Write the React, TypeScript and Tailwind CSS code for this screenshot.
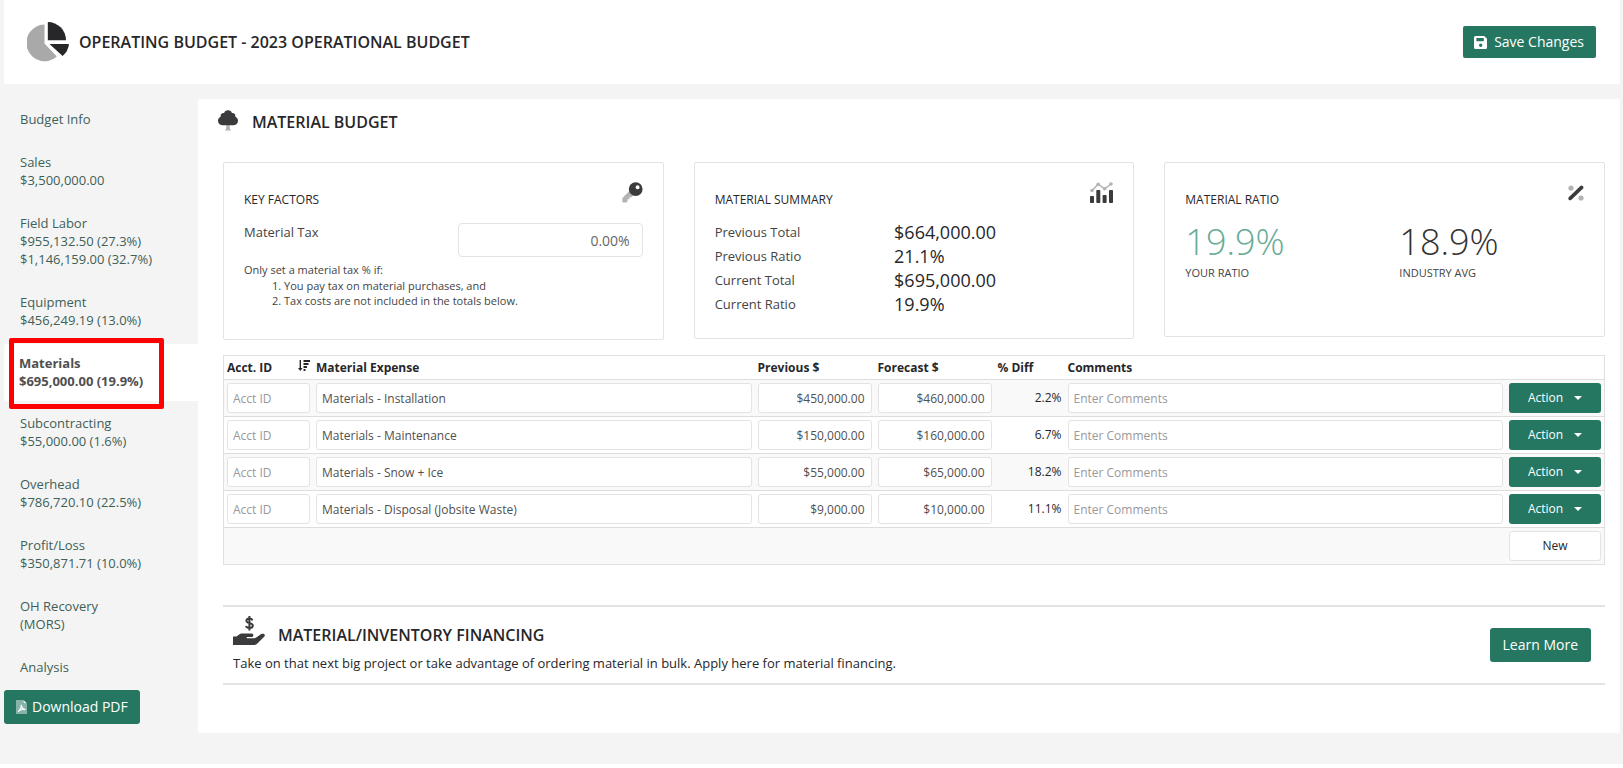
import { useState } from 'react'

const navItems = [
  { lines: ['Budget Info'] },
  { lines: ['Sales', '$3,500,000.00'] },
  { lines: ['Field Labor', '$955,132.50 (27.3%)', '$1,146,159.00 (32.7%)'] },
  { lines: ['Equipment', '$456,249.19 (13.0%)'] },
  { lines: ['Materials', '$695,000.00 (19.9%)'], active: true },
  { lines: ['Subcontracting', '$55,000.00 (1.6%)'] },
  { lines: ['Overhead', '$786,720.10 (22.5%)'] },
  { lines: ['Profit/Loss', '$350,871.71 (10.0%)'] },
  { lines: ['OH Recovery', '(MORS)'] },
  { lines: ['Analysis'] },
]

const summary = [
  { label: 'Previous Total', value: '$664,000.00' },
  { label: 'Previous Ratio', value: '21.1%' },
  { label: 'Current Total', value: '$695,000.00' },
  { label: 'Current Ratio', value: '19.9%' },
]

const initialRows = [
  { name: 'Materials - Installation', previous: '$450,000.00', forecast: '$460,000.00', diff: '2.2%' },
  { name: 'Materials - Maintenance', previous: '$150,000.00', forecast: '$160,000.00', diff: '6.7%' },
  { name: 'Materials - Snow + Ice', previous: '$55,000.00', forecast: '$65,000.00', diff: '18.2%' },
  { name: 'Materials - Disposal (Jobsite Waste)', previous: '$9,000.00', forecast: '$10,000.00', diff: '11.1%' },
]

const field = 'block h-[30px] w-full rounded-[3px] border border-[#e3e3e3] bg-white pr-[6px] pl-[5px] text-xs text-[#505050] placeholder:text-[#999] outline-none'

function PieIcon() {
  return (
    <svg className="h-10 w-[42px] shrink-0" viewBox="0 0 42 40" aria-hidden="true">
      <path d="M17.5 2.6v19l12.3 13A18.3 18.3 0 1 1 17.5 2.6Z" fill="#a9a9a9" />
      <path d="M20.8 0A18.2 18.2 0 0 1 39 18.2H20.8Z" fill="#27272a" />
      <path d="M22.5 22H42a18 18 0 0 1-6.4 12Z" fill="#27272a" />
    </svg>
  )
}

function TreeIcon() {
  return (
    <svg className="h-[21px] w-5 shrink-0" viewBox="0 0 20 21" aria-hidden="true">
      <path d="M8.6 14h2.8l.5 4.6 1.1 1.8H7l1.1-1.8Z" fill="#b3b3b3" />
      <path d="M10 .3c2 0 3.4 1 3.9 2.6 2.3-.2 3.9 1.5 3.5 3.9 1.5.7 2.6 2.2 2.6 4 0 2.5-1.8 4.4-4.3 4.4H4.3C1.8 15.2 0 13.3 0 10.8c0-1.800 1.100-3.300 2.600-4-.4-2.400 1.200-4.100 3.500-3.900C6.600 1.300 8 .3 10 .3Z" fill="#3b3b3d" />
    </svg>
  )
}

function KeyIcon() {
  return (
    <svg className="h-[21px] w-[21px]" viewBox="0 0 21 21" aria-hidden="true">
      <path d="M7.2 9.2.4 16v3.9l.7.6h3.6l.8-1.500v-1.700h2v-2h1.800l3.100-2.800Z" fill="#b3b3b3" />
      <path fillRule="evenodd" d="M13.7.2a6.900 6.900 0 1 1 0 13.800 6.900 6.900 0 0 1 0-13.800Zm1.900 3a2 2 0 1 0 0 4 2 2 0 0 0 0-4Z" fill="#3b3b3d" />
    </svg>
  )
}

function ChartIcon() {
  return (
    <svg className="h-[21px] w-[23px]" viewBox="0 0 23 21" aria-hidden="true">
      <path d="M2 8.5 8.2 2.200l6.400 4.600L21 2" fill="none" stroke="#b3b3b3" strokeWidth="1.5" />
      <g fill="#b3b3b3">
        <circle cx="2" cy="8.5" r="1.8" />
        <circle cx="8.2" cy="2.2" r="1.8" />
        <circle cx="14.6" cy="6.8" r="1.8" />
        <circle cx="21" cy="2" r="1.8" />
      </g>
      <g fill="#3b3b3d">
        <rect x="0" y="14" width="4" height="7" rx=".8" />
        <rect x="6.3" y="8" width="4" height="13" rx=".8" />
        <rect x="12.6" y="13" width="4" height="8" rx=".8" />
        <rect x="19" y="8" width="4" height="13" rx=".8" />
      </g>
    </svg>
  )
}

function PercentIcon() {
  return (
    <svg className="h-4 w-4" viewBox="0 0 16 16" aria-hidden="true">
      <circle cx="3" cy="3" r="2.6" fill="#b3b3b3" />
      <circle cx="13" cy="13" r="2.6" fill="#b3b3b3" />
      <path d="m2.2 13.4 11.4-11" stroke="#3b3b3d" strokeWidth="3.6" strokeLinecap="round" />
    </svg>
  )
}

function SaveIcon() {
  return (
    <svg className="h-[13px] w-[13px]" viewBox="0 0 13 13" aria-hidden="true">
      <path fillRule="evenodd" d="M1.5 0h8.7L13 2.8v8.700a1.500 1.500 0 0 1-1.500 1.500h-10A1.500 1.500 0 0 1 0 11.500v-10A1.500 1.500 0 0 1 1.500 0ZM2.400 2v3.200h7.400V2Zm4.300 5.600a1.700 1.700 0 1 0 0 3.400 1.700 1.700 0 0 0 0-3.400Z" fill="#fff" />
    </svg>
  )
}

function PdfIcon() {
  return (
    <svg className="h-[14px] w-[11px]" viewBox="0 0 11 14" aria-hidden="true">
      <path d="M0 0h7v4h4v10H0Z" fill="#fff" fillOpacity=".45" />
      <path d="M7.4 0 11 3.6H7.4Z" fill="#fff" />
      <path d="M5.3 4.8c.2 3-1.3 5.5-3.2 7M5.3 6c.5 2.2 2 3.4 4.1 3.7M3 10.4c1.8-.8 3.8-1.1 6.3-.8" fill="none" stroke="#fff" strokeWidth="1.2" />
    </svg>
  )
}

function SortIcon() {
  return (
    <svg className="h-3 w-3" viewBox="0 0 12 12" aria-hidden="true">
      <path d="M2.3 0v9" stroke="#27272a" strokeWidth="1.4" />
      <path d="M0 8h4.6L2.3 11Z" fill="#27272a" />
      <path d="M5.5 1H12M5.5 4h5M5.5 7H9M5.5 10h2" stroke="#27272a" strokeWidth="1.8" />
    </svg>
  )
}

function HandIcon() {
  return (
    <svg className="h-[29px] w-8 shrink-0" viewBox="0 0 32 29" aria-hidden="true">
      <path d="M19.6 4.4C19 3.2 17.9 2.6 16.4 2.6c-1.800 0-3 .8-3 2.200 0 3.300 6.400 1.300 6.400 4.800 0 1.500-1.300 2.500-3.300 2.500-1.700 0-3-.7-3.500-2.100M16.400 0v14.500" fill="none" stroke="#3b3b3d" strokeWidth="2" />
      <path d="M0 20.5h3.5l2.7-2.100c.7-.5 1.500-.8 2.400-.8h9.800c1.200 0 2 .8 2 1.700 0 1-.8 1.800-1.900 1.800h-4.700v1.200h7.300c.8 0 1.500-.2 2.100-.7l5-3.500c.8-.5 1.900-.6 2.600-.3 1.100.5 1.400 1.700.6 2.600l-7 7.200c-.8.9-1.700 1.400-3.100 1.400H0Z" fill="#3b3b3d" />
    </svg>
  )
}

export default function App() {
  const [rows, setRows] = useState(initialRows)

  const addRow = () => setRows([...rows, { name: '', previous: '$0.00', forecast: '$0.00', diff: '0.0%' }])

  return (
    <div className="min-h-screen bg-white font-['Open_Sans',sans-serif] text-[13px] text-[#27272a]">
      <div className="bg-[#f4f4f4] pb-[31px] pl-1 pr-[3px]">
        <header className="flex h-[84px] items-center justify-between rounded-b-[2px] bg-white pl-[23px] pr-6">
          <div className="flex items-center gap-[10px]">
            <PieIcon />
            <h1 className="text-base font-semibold">OPERATING BUDGET - 2023 OPERATIONAL BUDGET</h1>
          </div>
          <button className="flex h-8 items-center gap-[7px] rounded-[2px] bg-[#257761] pr-3 pl-[11px] text-sm text-white">
            <SaveIcon />
            Save Changes
          </button>
        </header>

        <div className="mt-[15px] flex items-start">
          <aside className="w-[194px] shrink-0 pt-px">
            <nav className="flex flex-col gap-1 leading-[18px]">
              {navItems.map((item) => (
                <a
                  key={item.lines[0]}
                  href="#"
                  className={
                    item.active
                      ? 'relative -mb-px block rounded-l-[3px] bg-white pt-[10px] pb-[11px] pl-[15px] font-bold text-[#505050]'
                      : 'block pt-[10px] pb-[11px] pl-4 text-[#3f5f57]'
                  }
                >
                  {item.lines.map((line) => (
                    <span key={line} className="block">{line}</span>
                  ))}
                  {item.active && (
                    <span className="absolute -top-[6px] left-[5px] h-[71px] w-[155px] rounded-[2px] border-[5px] border-[#ff0000]" />
                  )}
                </a>
              ))}
            </nav>
            <button className="mt-[3px] flex h-[34px] items-center gap-[5px] rounded-[3px] bg-[#257761] px-3 text-sm text-white">
              <PdfIcon />
              Download PDF
            </button>
          </aside>

          <main className="min-w-0 flex-1 rounded-[2px] bg-white pr-[15px] pb-12 pl-[25px]">
            <div className="-ml-[5px] flex h-[63px] items-start gap-[14px] pt-[11px]">
              <TreeIcon />
              <h2 className="text-base font-semibold">MATERIAL BUDGET</h2>
            </div>

            <div className="grid grid-cols-3 items-start gap-[30px]">
              <section className="min-h-[178px] rounded-[2px] border border-[#e3e3e3] px-5 pt-[19px]">
                <div className="flex h-[41px] justify-between">
                  <h3 className="pt-2 text-xs leading-[20px] font-medium">KEY FACTORS</h3>
                  <KeyIcon />
                </div>
                <div className="flex justify-between">
                  <label htmlFor="material-tax" className="leading-[18px] text-[#444]">Material Tax</label>
                  <input
                    id="material-tax"
                    defaultValue="0.00%"
                    className="h-[34px] w-[185px] rounded border border-[#e3e3e3] px-3 text-right text-sm text-[#666] outline-none"
                  />
                </div>
                <div className="mt-[5px] text-[11px] leading-[15px] text-[#444]">
                  <p className="leading-[16px]">Only set a material tax % if:</p>
                  <ol className="list-inside list-decimal pl-7">
                    <li>You pay tax on material purchases, and</li>
                    <li>Tax costs are not included in the totals below.</li>
                  </ol>
                </div>
              </section>

              <section className="min-h-[177px] rounded-[2px] border border-[#e3e3e3] px-5 pt-[19px]">
                <div className="flex h-[38px] justify-between">
                  <h3 className="pt-2 text-xs leading-[20px] font-medium">MATERIAL SUMMARY</h3>
                  <ChartIcon />
                </div>
                <dl>
                  {summary.map((item) => (
                    <div key={item.label} className="flex leading-[24px]">
                      <dt className="w-[45%] text-[#444]">{item.label}</dt>
                      <dd className="text-lg leading-[24px]">{item.value}</dd>
                    </div>
                  ))}
                </dl>
              </section>

              <section className="min-h-[175px] rounded-[2px] border border-[#e3e3e3] px-5 pt-[19px]">
                <div className="flex h-[37px] justify-between">
                  <h3 className="pt-2 text-xs leading-[20px] font-medium">MATERIAL RATIO</h3>
                  <div className="pt-[3px]"><PercentIcon /></div>
                </div>
                <div className="grid grid-cols-[214px_1fr]">
                  <div>
                    <p className="text-4xl leading-[46px] font-light text-[#68ab97]">19.9%</p>
                    <p className="text-[11px] leading-[15px] text-[#444]">YOUR RATIO</p>
                  </div>
                  <div>
                    <p className="text-4xl leading-[46px] font-light text-[#333]">18.9%</p>
                    <p className="text-[11px] leading-[15px] text-[#444]">INDUSTRY AVG</p>
                  </div>
                </div>
              </section>
            </div>

            <table className="mt-[15px] w-full table-fixed border-separate border-spacing-0 border border-[#e0e0e0] text-xs">
              <thead>
                <tr className="h-[23px] text-left">
                  <th className="w-[89px] px-[3px]">
                    <div className="flex justify-between">
                      Acct. ID
                      <SortIcon />
                    </div>
                  </th>
                  <th className="px-[3px]">Material Expense</th>
                  <th className="w-[120px] px-[3px]">Previous $</th>
                  <th className="w-[120px] px-[3px]">Forecast $</th>
                  <th className="w-[70px] px-[3px]">% Diff</th>
                  <th className="px-[3px]">Comments</th>
                  <th className="w-[98px]" aria-label="Actions" />
                </tr>
              </thead>
              <tbody>
                {rows.map((row, index) => (
                  <tr key={index} className="odd:bg-[#f9f9f9] *:border-t *:border-[#ddd] *:p-[3px]">
                    <td><input aria-label="Acct ID" placeholder="Acct ID" className={field} /></td>
                    <td><input aria-label="Material Expense" defaultValue={row.name} className={field} /></td>
                    <td><input aria-label="Previous" defaultValue={row.previous} className={`${field} text-right`} /></td>
                    <td><input aria-label="Forecast" defaultValue={row.forecast} className={`${field} text-right`} /></td>
                    <td className="text-right">{row.diff}</td>
                    <td><input aria-label="Comments" placeholder="Enter Comments" className={field} /></td>
                    <td>
                      <button className="flex h-[30px] w-full items-center justify-center gap-[11px] rounded-[3px] bg-[#257761] text-white">
                        Action
                        <svg className="h-1 w-2" viewBox="0 0 8 4" aria-hidden="true">
                          <path d="M0 0h8L4 4Z" fill="currentColor" />
                        </svg>
                      </button>
                    </td>
                  </tr>
                ))}
                <tr className="bg-[#f9f9f9] *:border-t *:border-[#ddd] *:p-[3px]">
                  <td colSpan={6} />
                  <td>
                    <button onClick={addRow} className="h-[30px] w-full rounded-[3px] border border-[#e3e3e3] bg-white">New</button>
                  </td>
                </tr>
              </tbody>
            </table>

            <section className="mt-10 flex items-center justify-between border-y-2 border-[#e3e3e3] py-[9px] pr-[14px] pl-[10px]">
              <div>
                <div className="flex items-start gap-[13px]">
                  <HandIcon />
                  <h2 className="pt-[7px] text-base leading-[24px] font-semibold">MATERIAL/INVENTORY FINANCING</h2>
                </div>
                <p className="mt-[6px] leading-[21px]">
                  Take on that next big project or take advantage of ordering material in bulk. Apply here for material financing.
                </p>
              </div>
              <button className="h-[34px] rounded-[3px] bg-[#257761] px-[13px] text-sm text-white">Learn More</button>
            </section>
          </main>
        </div>
      </div>
    </div>
  )
}
